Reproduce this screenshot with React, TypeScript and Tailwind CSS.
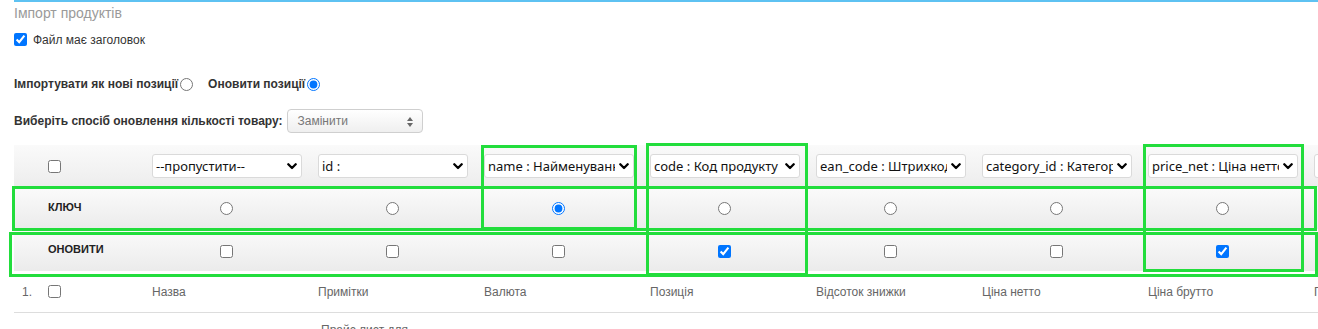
const columns = [
  { field: "--пропустити--", key: false, update: false, label: "Назва" },
  { field: "id :", key: false, update: false, label: "Примітки" },
  { field: "name : Найменування", key: true, update: false, label: "Валюта" },
  { field: "code : Код продукту", key: false, update: true, label: "Позиція" },
  { field: "ean_code : Штрихкод", key: false, update: false, label: "Відсоток знижки" },
  { field: "category_id : Категорія", key: false, update: false, label: "Ціна нетто" },
  { field: "price_net : Ціна нетто", key: false, update: true, label: "Ціна брутто" },
  { field: "price_gross : Ціна брутто", key: false, update: false, label: "ПДВ" },
];

const highlights = [
  "left-[12px] top-[186px] w-[1305px] h-[45px]",
  "left-[9px] top-[232px] w-[1309px] h-[45px]",
  "left-[481px] top-[145px] w-[156px] h-[85px]",
  "left-[646px] top-[143px] w-[162px] h-[133px]",
  "left-[1143px] top-[144px] w-[161px] h-[128px]",
];

const FieldSelect = ({ value }: { value: string }) => (
  <div className="relative w-[150px]">
    <select
      defaultValue={value}
      className="appearance-none w-[150px] h-[24px] border border-[#dadada] rounded-[3px] bg-white pl-[3px] pr-[18px] text-[13px] text-[#111] font-['Noto_Sans',sans-serif] leading-[22px] outline-none"
    >
      <option>{value}</option>
    </select>
    <svg
      className="absolute right-[5px] top-[9px] pointer-events-none"
      width="10"
      height="7"
      viewBox="0 0 10 7"
    >
      <path d="M1.3 1.3 L5 5 L8.7 1.3" fill="none" stroke="#000" strokeWidth="2.3" strokeLinecap="round" strokeLinejoin="round" />
    </svg>
  </div>
);

export default function App() {
  return (
    <div className="relative w-[1318px] h-[329px] overflow-hidden bg-white font-['Liberation_Sans',Arial,sans-serif] text-[#333]">
      <div className="ml-[14px]">
        <div className="h-[2px] bg-[#5ec2f2]" />
        <h3 className="mt-[2px] text-[14px] leading-[18px] text-[#9a9a9a]">Імпорт продуктів</h3>

        <label className="mt-[9px] flex items-center h-[17px] gap-[6px] text-[12px] text-[#333]">
          <input type="checkbox" defaultChecked className="m-0 w-[13px] h-[13px]" />
          Файл має заголовок
        </label>

        <div className="mt-[27px] flex items-center h-[18px] text-[12px] font-bold text-[#333]">
          <span>Імпортувати як нові позиції</span>
          <input type="radio" name="mode" className="m-0 ml-[2px] w-[13px] h-[13px]" />
          <span className="ml-[15px]">Оновити позиції</span>
          <input type="radio" name="mode" defaultChecked className="m-0 ml-[2px] w-[13px] h-[13px]" />
        </div>

        <div className="mt-[16px] flex items-center h-[24px] gap-[4px] text-[12px]">
          <span className="font-bold text-[#333]">Виберіть спосіб оновлення кількості товару:</span>
          <div className="relative w-[136px] h-[24px] rounded-[4px] border border-[#cfcfcf] bg-linear-to-b from-white to-[#efefef] flex items-center pl-[10px] text-[#777]">
            Замінити
            <div className="absolute right-[9px] top-[7px] flex flex-col gap-[2px]">
              <div className="w-0 h-0 border-x-[3.5px] border-x-transparent border-b-[4px] border-b-[#666]" />
              <div className="w-0 h-0 border-x-[3.5px] border-x-transparent border-t-[4px] border-t-[#666]" />
            </div>
          </div>
        </div>

        <div className="mt-[12px] w-[1500px]">
          <div className="flex h-[42px] items-center bg-linear-to-b from-[#fafafa] to-[#ededed]">
            <div className="w-[130px] pl-[34px] flex items-center">
              <input type="checkbox" className="m-0 w-[13px] h-[13px]" />
            </div>
            {columns.map((c) => (
              <div key={c.field} className="w-[166px] px-[8px]">
                <FieldSelect value={c.field} />
              </div>
            ))}
          </div>

          <div className="flex h-[42px] bg-linear-to-b from-[#fbfbfb] to-[#ebebeb]">
            <div className="w-[130px] pl-[34px] pt-[12px] text-[11px] font-bold text-[#222]">КЛЮЧ</div>
            {columns.map((c) => (
              <div key={c.field} className="w-[166px] pr-[2px] flex items-center justify-center">
                <input type="radio" name="key" defaultChecked={c.key} className="m-0 w-[13px] h-[13px]" />
              </div>
            ))}
          </div>

          <div className="flex h-[42px] bg-linear-to-b from-[#fbfbfb] to-[#ebebeb]">
            <div className="w-[130px] pl-[34px] pt-[12px] text-[11px] font-bold text-[#222]">ОНОВИТИ</div>
            {columns.map((c) => (
              <div key={c.field} className="w-[166px] pr-[2px] pt-[2px] flex items-center justify-center">
                <input type="checkbox" defaultChecked={c.update} className="m-0 w-[13px] h-[13px]" />
              </div>
            ))}
          </div>

          <div className="flex h-[42px] items-center border-b border-[#dddddd] text-[12px] text-[#666]">
            <div className="w-[130px] pl-[8px] flex items-center">
              <span className="w-[26px]">1.</span>
              <input type="checkbox" className="m-0 w-[13px] h-[13px]" />
            </div>
            {columns.map((c) => (
              <div key={c.field} className="w-[166px] px-[8px] whitespace-nowrap">
                {c.label}
              </div>
            ))}
          </div>

          <div className="flex text-[12px] text-[#666]">
            <div className="w-[130px]" />
            <div className="w-[166px]" />
            <div className="w-[166px] pl-[11px] pt-[8px] whitespace-nowrap">Прайс лист для</div>
          </div>
        </div>
      </div>

      {highlights.map((h) => (
        <div key={h} className={`absolute border-[3px] border-[#22dd3c] pointer-events-none ${h}`} />
      ))}
    </div>
  );
}
